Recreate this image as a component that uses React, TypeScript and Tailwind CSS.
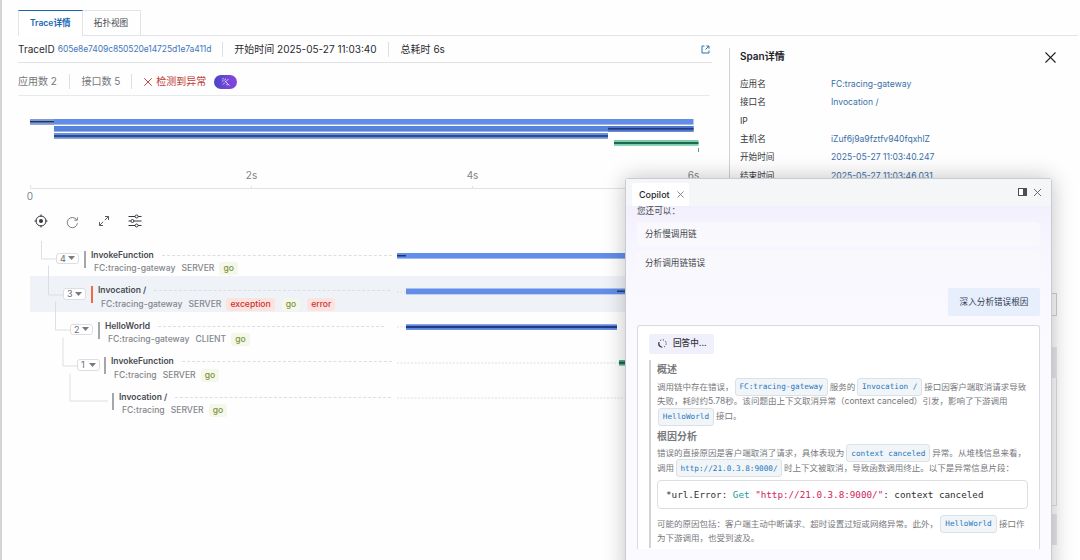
import type { ReactNode } from 'react';
import { clsx } from 'clsx';
import { X } from 'lucide-react';

const spans = [
  { name: 'InvokeFunction', app: 'FC:tracing-gateway', kind: 'SERVER', tags: ['go'], count: 4, pad: 'pl-[26px]', gap: 'w-[5px]' },
  { name: 'Invocation /', app: 'FC:tracing-gateway', kind: 'SERVER', tags: ['exception', 'go', 'error'], count: 3, pad: 'pl-[33px]', gap: 'w-[5px]' },
  { name: 'HelloWorld', app: 'FC:tracing-gateway', kind: 'CLIENT', tags: ['go'], count: 2, pad: 'pl-[40px]', gap: 'w-[5px]' },
  { name: 'InvokeFunction', app: 'FC:tracing', kind: 'SERVER', tags: ['go'], count: 1, pad: 'pl-[47px]', gap: 'w-[4px]' },
  { name: 'Invocation /', app: 'FC:tracing', kind: 'SERVER', tags: ['go'], count: 0, pad: 'pl-[82px]', gap: 'w-0' },
];

const details = [
  { label: '应用名', value: 'FC:tracing-gateway' },
  { label: '接口名', value: 'Invocation /' },
  { label: 'IP', value: '' },
  { label: '主机名', value: 'iZuf6j9a9fztfv940fqxhlZ' },
  { label: '开始时间', value: '2025-05-27 11:03:40.247' },
  { label: '结束时间', value: '2025-05-27 11:03:46.031' },
];

function Divider({ className }: { className?: string }) {
  return <span className={clsx('h-[15px] w-px shrink-0 bg-[#dcdfe3]', className)} />;
}

function Tag({ name }: { name: string }) {
  return (
    <span
      className={clsx(
        'rounded-[3px] px-[4px] leading-[13px]',
        name === 'go' ? 'bg-[#f4f7e9] text-[#7d9440]' : 'bg-[#fde3e0] text-[#c8322d]',
      )}
    >
      {name}
    </span>
  );
}

function Code({ children, className }: { children: ReactNode; className?: string }) {
  return (
    <code
      className={clsx(
        'flex h-[18px] shrink-0 items-center justify-center rounded-[3px] border border-[#d9e2e8] bg-[#f1f5f8] font-["DejaVu_Sans_Mono",monospace] text-[7.7px] text-[#1f78c1]',
        className,
      )}
    >
      {children}
    </code>
  );
}

function Line({ children }: { children: ReactNode }) {
  return <div className="flex h-[14.8px] items-center whitespace-nowrap">{children}</div>;
}

function Timeline() {
  return (
    <svg width="694" height="109" viewBox="18 96 694 109" className="block shrink-0 overflow-visible">
      <rect x="30" y="119" width="663.5" height="5.6" fill="#618ce7" />
      <rect x="30" y="119" width="24" height="5.6" fill="#7f9bd0" />
      <rect x="30" y="121" width="24" height="1.4" fill="#1e3468" />
      <rect x="54" y="126" width="639.5" height="5.6" fill="#5682dc" />
      <rect x="608" y="126" width="85.5" height="5.6" fill="#5074c6" />
      <rect x="608" y="128" width="85.5" height="1.6" fill="#203a86" />
      <rect x="54" y="133" width="554" height="5.8" fill="#6d90d2" />
      <rect x="54" y="135" width="554" height="2" fill="#274b97" />
      <rect x="614" y="140" width="84.5" height="5.8" fill="#76cfa9" />
      <rect x="614" y="142" width="84.5" height="2" fill="#21674f" />
      <rect x="698" y="148" width="1" height="4" fill="#7a8a86" />
      <path d="M30.500 185v3.500h670M251.500 186v2M472.500 186v2M693.500 186v2" fill="none" stroke="#dfe1e4" />
      <g className="fill-[#80838a] text-[10px]" textAnchor="middle">
        <text x="30" y="200">0</text>
        <text x="251.500" y="178.500">2s</text>
        <text x="472.500" y="178.500">4s</text>
        <text x="693.500" y="178.500">6s</text>
      </g>
    </svg>
  );
}

function Toolbar() {
  return (
    <div className="flex h-[32px] shrink-0 items-center pl-[16px] text-[#34373d]">
      <svg width="14" height="14" viewBox="0 0 14 14" fill="none" stroke="currentColor">
        <circle cx="7" cy="7" r="5" />
        <circle cx="7" cy="7" r="2" fill="currentColor" stroke="none" />
        <path d="M7 0.500V3M7 11V13.500M0.500 7H3M11 7H13.500" />
      </svg>
      <svg width="14" height="14" viewBox="0 0 14 14" fill="none" stroke="#777a80" className="mt-px ml-[17px]">
        <path d="M11.600 4.800A5.100 5.100 0 1 0 12.400 8.200M12.300 2.300V5.200H9.300" />
      </svg>
      <svg width="12" height="12" viewBox="0 0 12 12" fill="none" stroke="#55585e" className="ml-[19px]">
        <path d="M7 1.500H10.500V5M10.500 1.500L6.800 5.200M1.500 7V10.500H5M1.500 10.500L5.200 6.800" />
      </svg>
      <svg width="14" height="14" viewBox="0 0 14 14" fill="none" stroke="currentColor" className="ml-[18px]">
        <path d="M0.500 2.500H7M10.200 2.500H13.500M0.500 7H2.800M6 7H13.500M0.500 11.500H7M10.200 11.500H13.500" />
        <circle cx="8.600" cy="2.500" r="1.500" />
        <circle cx="4.400" cy="7" r="1.500" />
        <circle cx="8.600" cy="11.500" r="1.500" />
      </svg>
    </div>
  );
}

function SpanTree() {
  return (
    <div className="relative mt-[3.500px] ml-[12px] w-[682px] font-medium">
      {spans.map((span, i) => (
        <div key={i} className={clsx('flex h-[35.600px] items-start pt-[8px]', span.pad, i === 1 && 'bg-[#eff3f8]')}>
          {span.count > 0 && (
            <span className="mt-[4px] flex h-[11.500px] w-[23px] shrink-0 items-center justify-between rounded-[3px] border border-[#dcdee2] bg-white px-[3px] text-[9px] font-normal text-[#686b72]">
              {span.count}
              <svg width="7" height="4" viewBox="0 0 7 4" fill="#777a80">
                <path d="M0 0H7L3.500 4Z" />
              </svg>
            </span>
          )}
          <span className={clsx('shrink-0', span.gap)} />
          <span className={clsx('mt-[2px] h-[17px] w-[2px] shrink-0', i === 1 ? 'bg-[#ec6a4a]' : 'bg-[#a5a6aa]')} />
          <div className="ml-[5px] min-w-0 flex-1">
            <div className="flex h-[13px] items-center text-[8.500px] font-semibold whitespace-nowrap text-[#484a50]">
              {span.name}
              <span
                className={clsx(
                  'ml-[8px] border-t border-dashed border-[#dcdfe1]',
                  ['w-[230px]', 'w-[236px]', 'w-[226px]', 'w-[210px]', 'w-[216px]'][i],
                )}
              />
            </div>
            <div className="flex h-[14px] items-center pl-[3px] text-[8.600px] whitespace-nowrap text-[#85878c]">
              <span>{span.app}</span>
              <span className="mr-[5px] ml-[6px]">{span.kind}</span>
              <span className="flex gap-[7px]">
                {span.tags.map((tag) => (
                  <Tag key={tag} name={tag} />
                ))}
              </span>
            </div>
          </div>
        </div>
      ))}
      {/* branch lines and duration bars */}
      <svg width="682" height="178" viewBox="30 240.500 682 178" fill="none" className="absolute top-0 left-0">
        <path
          d="M41.500 240.500V258.500H56M48.500 265V294.500H63M55.500 301V329.500H70M63 337V365.500H77M70 373V400.500H108"
          stroke="#dddee1"
        />
        <path d="M397 291.500H406M397 326.500H406M397 362.500H619M397 397.500H625" stroke="#dcdfe1" strokeDasharray="2 1.500" />
        <rect x="397" y="252.500" width="300" height="5.600" fill="#628de8" />
        <rect x="397" y="254.500" width="9" height="1.500" fill="#1e3468" />
        <rect x="406" y="288" width="291" height="5.800" fill="#628de8" />
        <rect x="617" y="290" width="80" height="1.600" fill="#24407c" />
        <rect x="406" y="323.800" width="211" height="5.600" fill="#5d85db" />
        <rect x="406" y="325.500" width="211" height="2" fill="#1f3c86" />
        <rect x="619" y="359.500" width="80" height="5.600" fill="#4cae88" />
        <rect x="619" y="361.300" width="80" height="2" fill="#1c5c46" />
      </svg>
    </div>
  );
}

function Copilot() {
  return (
    <div className="absolute top-[178px] left-[625px] flex h-[400px] w-[427px] flex-col rounded-t-[3px] border border-[#c9cbd2] bg-white shadow-[0_0_22px_rgba(0,0,0,0.24)]">
      <div className="flex h-[27px] shrink-0 items-end bg-[#f5f6f8] pr-[7px] pl-[6px]">
        <div className="flex h-[23px] w-[57px] items-center rounded-t-[3px] bg-white pl-[7px] text-[9px] font-medium text-[#25272b]">
          Copilot
          <X className="ml-[5px] size-[11px] shrink-0 text-[#6d7076]" strokeWidth={1.8} />
        </div>
        <span className="flex-1" />
        <svg width="9" height="8" viewBox="0 0 9 8" className="mb-[10px]">
          <rect x="0.500" y="0.500" width="8" height="7" fill="#fff" stroke="#4c4f55" />
          <rect x="5" y="0.500" width="3.500" height="7" fill="#4c4f55" />
        </svg>
        <X className="mb-[7px] ml-[4px] size-[13px] text-[#5b5e64]" strokeWidth={1.7} />
      </div>
      <div className="flex flex-1 flex-col bg-linear-to-b from-[#f3f0fd] via-[#f8f7fe] via-15% to-[#fbfbff] to-45% px-[11px] text-[8.600px] text-[#44474d]">
        <div className="h-[13px] leading-[11px]">您还可以：</div>
        <div className="mt-[3px] flex h-[24px] items-center rounded-sm bg-[#f8f8fd] pl-[8px]">分析慢调用链</div>
        <div className="mt-[5px] flex h-[24px] items-center rounded-sm bg-[#f8f8fd] pl-[8px]">分析调用链错误</div>
        <div className="mt-[13px] flex h-[28px] w-[92px] items-center justify-center self-end rounded-[2px] bg-[#e8effc] text-[#303c58]">
          深入分析错误根因
        </div>
        <div className="mt-[8.500px] h-[224px] w-[403px] shrink-0 rounded-t-[3px] border border-b-0 border-[#d9dade] bg-white pt-[8px] pl-[11px]">
          <div className="flex h-[20px] w-[65px] items-center rounded-[2px] bg-[#eff0fc] pl-[9px] font-medium text-[#34363d]">
            <svg width="9" height="9" viewBox="0 0 9 9" fill="none" stroke="#34363d" className="mr-[6px]">
              <circle cx="4.500" cy="4.500" r="3.700" strokeDasharray="1.200 1.700" />
              <path d="M1 3.500A3.700 3.700 0 0 0 3.500 8" strokeWidth="1.200" />
            </svg>
            回答中...
          </div>
          <div className="mt-[6px] h-[188px] border-l-2 border-[#d3d3d6] pt-[0.700px] pl-[6px] text-[8.530px] text-[#77787d]">
            <h3 className="h-[19.500px] text-[10px] leading-[19px] font-bold text-[#77787c]">概述</h3>
            <Line>
              调用链中存在错误，
              <Code className="ml-[1px] w-[93px]">FC:tracing-gateway</Code>
              <span className="mx-[2px]">服务的</span>
              <Code className="w-[65px]">Invocation /</Code>
              <span className="ml-[2px]">接口因客户端取消请求导致</span>
            </Line>
            <Line>失败，耗时约5.78秒。该问题由上下文取消异常（context canceled）引发，影响了下游调用</Line>
            <Line>
              <Code className="ml-[1px] w-[56px]">HelloWorld</Code>
              <span className="ml-[2px]">接口。</span>
            </Line>
            <h3 className="h-[22px] text-[10px] leading-[24px] font-bold text-[#77787c]">根因分析</h3>
            <Line>
              错误的直接原因是客户端取消了请求，具体表现为
              <Code className="ml-[2px] w-[84px]">context canceled</Code>
              <span className="ml-[2px]">异常。从堆栈信息来看，</span>
            </Line>
            <Line>
              调用
              <Code className="ml-[2px] w-[106px]">http://21.0.3.8:9000/</Code>
              <span className="ml-[2px]">时上下文被取消，导致函数调用终止。以下是异常信息片段：</span>
            </Line>
            <pre className="mt-[4px] mb-[8px] h-[29px] w-[371px] rounded-[4px] border border-[#dddee2] bg-white pl-[8px] font-['DejaVu_Sans_Mono',monospace] text-[9.250px] leading-[27px] text-[#2d2f33]">
              *url.Error: <span className="text-[#229a9a]">Get</span>{' '}
              <span className="text-[#d01c5b]">"http://21.0.3.8:9000/"</span>: context canceled
            </pre>
            <Line>
              可能的原因包括：客户端主动中断请求、超时设置过短或网络异常。此外，
              <Code className="ml-[2px] w-[57px]">HelloWorld</Code>
              <span className="ml-[2px]">接口作</span>
            </Line>
            <Line>为下游调用，也受到波及。</Line>
          </div>
        </div>
      </div>
    </div>
  );
}

export default function App() {
  return (
    <div className="relative flex h-[560px] w-[1080px] overflow-hidden bg-[#fefefe] font-[Inter,'Noto_Sans_CJK_SC',sans-serif]">
      <div className="w-[2px] shrink-0 bg-[#d3d4d6]" />
      <div className="flex flex-1 flex-col pt-[10px] pl-[16px]">
        <div className="flex h-[26px] w-[1060px] shrink-0 border-b border-[#e3e4e7] text-[8.600px]">
          <div className="-mb-px flex w-[64.500px] items-center justify-center border-x border-t border-x-[#e3e4e7] border-t-[#1668b3] bg-white font-semibold text-[#1668b3]">
            Trace详情
          </div>
          <div className="flex w-[58px] items-center justify-center border-t border-r border-[#e3e4e7] text-[#47494f]">
            拓扑视图
          </div>
        </div>
        <div className="flex">
          <main className="flex w-[711px] shrink-0 flex-col">
            <div className="flex h-[27px] w-[694px] shrink-0 items-center border-b border-[#e0e2e5] text-[10px] whitespace-nowrap text-[#292b30]">
              <span>TraceID</span>
              <span className="ml-[3px] w-[154px] text-[8.500px] tracking-[-0.100px] text-[#4377bd]">
                605e8e7409c850520e14725d1e7a411d
              </span>
              <Divider className="ml-[10px]" />
              <span className="ml-[11.500px]">开始时间 2025-05-27 11:03:40</span>
              <Divider className="ml-[11px]" />
              <span className="ml-[12px]">总耗时 6s</span>
              <svg width="9" height="9" viewBox="0 0 9 9" fill="none" stroke="#2d73ad" className="mr-[2px] ml-auto">
                <path d="M3.500 1H1V8H8V5.500M5.300 1H8V3.700M8 1L4.500 4.500" />
              </svg>
            </div>
            <div className="flex h-[33px] w-[692px] shrink-0 items-center border-b border-[#e8e9eb] pt-[5px] text-[10px] whitespace-nowrap text-[#75777c]">
              <span>应用数 2</span>
              <Divider className="ml-[12px]" />
              <span className="ml-[11.500px]">接口数 5</span>
              <Divider className="ml-[11px]" />
              <X className="ml-[9px] size-[14px] text-[#c23a32]" strokeWidth={1.6} />
              <span className="ml-px text-[#c23a32]">检测到异常</span>
              <span className="ml-[8px] flex h-[14px] w-[23px] items-center justify-center rounded-full bg-linear-to-r from-[#4b45c8] to-[#8b43e0]">
                <svg width="10" height="10" viewBox="0 0 10 10" fill="none" stroke="#e8e0ff" strokeWidth="0.900">
                  <path d="M3.500 3.500L8.500 8.500M2 1V2.500M1 4H2.500M4.500 1.500L4 3M7.500 2L5 4.500M2 7.500L4 5.500M6 7V8.500" />
                </svg>
              </span>
            </div>
            <Timeline />
            <Toolbar />
            <SpanTree />
          </main>
          <aside className="mt-[12px] h-[512px] w-[330px] border-l border-[#cfd1d4] pl-[10px] text-[8.600px] text-[#34363b]">
            <div className="flex h-[16px] items-center justify-between text-[10px] font-semibold text-[#222428]">
              Span详情
              <X className="mt-[2px] -mr-[1px] size-[19px] text-[#202226]" strokeWidth={1.4} />
            </div>
            <dl className="mt-[11px]">
              {details.map((item) => (
                <div key={item.label} className="flex h-[18.400px] items-center">
                  <dt className="w-[91px]">{item.label}</dt>
                  <dd className="text-[#3a6fa8]">{item.value}</dd>
                </div>
              ))}
            </dl>
            <div className="mt-[108px] w-[317px] bg-[#fafafa]">
              <div className="h-[23px] border border-[#cdced2]" />
              <div className="mt-[31px] h-[31px] bg-[#e6e6e8]" />
              <div className="h-[128px] border-r border-b border-[#dcdde0]" />
              <div className="mt-[8px] h-[31px] bg-[#e6e6e8]" />
            </div>
          </aside>
        </div>
      </div>
      <Copilot />
    </div>
  );
}
